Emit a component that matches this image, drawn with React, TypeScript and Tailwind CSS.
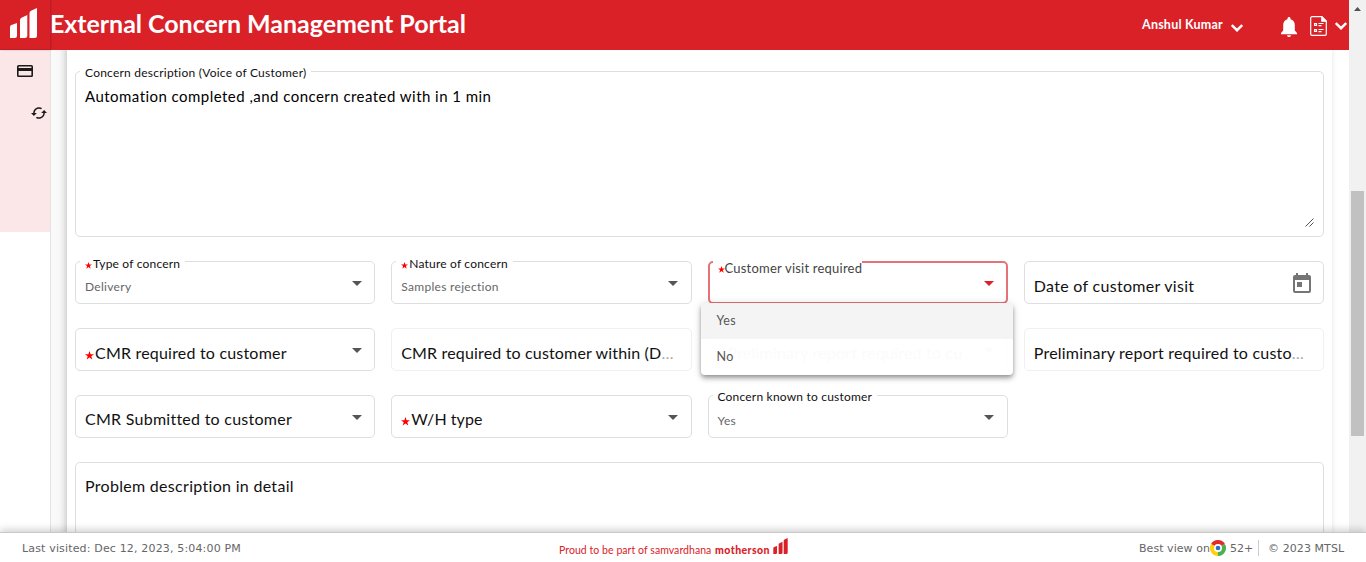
import React from "react";

const mulish = "font-['Lato','Open_Sans',sans-serif]";

function Star({ className }: { className: string }) {
  return (
    <svg viewBox="0 0 20 20" className={`shrink-0 fill-[#ff0000] ${className}`}>
      <path d="M10 0l2.500 7H20l-6 4.700L16.200 19 10 14.600 3.800 19 6 11.700 0 7h7.500z" />
    </svg>
  );
}

function Bars({ className }: { className: string }) {
  return (
    <svg viewBox="0 0 27 30" className={`shrink-0 ${className}`} fill="currentColor">
      <path d="M0 19q0-1.500 1.500-2L7 15v12.500q0 2.500-2.500 2.500H0z" />
      <path d="M10 12q0-1.500 1.500-2.200L17.300 7v20.500q0 2.500-2.500 2.500H10z" />
      <path d="M19.500 5q0-1.500 1.500-2.200L27 0v27.500q0 2.500-2.500 2.500h-5z" />
    </svg>
  );
}

function Chevron() {
  return (
    <svg viewBox="0 0 12 8" className="h-2 w-3 shrink-0" fill="none" stroke="white" strokeWidth="2.400">
      <path d="M.8 1 6 6.200 11.200 1" />
    </svg>
  );
}

function Header() {
  return (
    <header className="relative z-20 flex h-[50px] w-[1349px] shrink-0 items-start bg-[#da2128] text-white">
      <div className="h-[50px] w-[50px] shrink-0 border-b border-[#c01c23] bg-[#d82027] pl-[10px] pt-2 shadow-[1px_0_2px_rgba(0,0,0,0.2)]">
        <Bars className="h-[30px] w-[27px]" />
      </div>
      <h1 className="whitespace-nowrap pt-[7px] text-[25px] font-bold leading-[32px] tracking-[-0.04px]">
        External Concern Management Portal
      </h1>
      <div className="ml-auto flex items-start">
        <span className="mt-[17px] w-[89px] whitespace-nowrap text-[12.500px] font-bold leading-4 tracking-[0.22px]">Anshul Kumar</span>
        <div className="mr-[38px] mt-6"><Chevron /></div>
        <svg viewBox="0 0 16 20" className="mr-[13px] mt-[17px] h-5 w-4" fill="white">
          <path d="M8 0c.9 0 1.500.6 1.500 1.500v.7C12.200 2.900 13.800 5.200 13.800 8v5.500L16 16v1.300H0V16l2.200-2.500V8c0-2.800 1.600-5.100 4.300-5.800v-.7C6.500.6 7.100 0 8 0zM6 18.200h4c0 1.100-.9 1.800-2 1.800s-2-.7-2-1.800z" />
        </svg>
        <svg viewBox="0 0 17 20" className="mr-2 mt-4 h-5 w-[17px]" fill="none" stroke="white" strokeWidth="1.200">
          <path d="M2 .7h9.800l4.500 4.500v12.800a1.300 1.300 0 0 1-1.300 1.300h-13A1.300 1.300 0 0 1 .7 18v-16A1.300 1.300 0 0 1 2 .7z" />
          <path d="M11.800.7v4.500h4.500z" fill="white" />
          <path d="M4.600 7.600h1.900v1.900H4.600zM4.600 13.600h1.900v1.900H4.600zM8.500 7.500h5M8.500 9.700h3M8.500 13.500h5M8.500 15.700h3" />
        </svg>
        <div className="mr-[2px] mt-[22px]"><Chevron /></div>
      </div>
    </header>
  );
}

function Sidebar() {
  return (
    <aside className="w-[51px] shrink-0 border-r border-[#e3e3e3] bg-white">
      <div className="h-[182px] bg-[#fbe7e8] pt-[15px] text-[#1d1a1a]">
        <svg viewBox="0 0 15 12" className="ml-[17px] h-3 w-[16px]" preserveAspectRatio="none" fill="currentColor">
          <path fillRule="evenodd" d="M1.500 0h12A1.500 1.500 0 0 1 15 1.500v9a1.500 1.500 0 0 1-1.500 1.500h-12A1.500 1.500 0 0 1 0 10.500v-9A1.500 1.500 0 0 1 1.500 0zM1.500 1.500V3h12V1.500zM1.500 6v4.500h12V6z" />
        </svg>
        <svg viewBox="1 4 22 16" className="ml-[31px] mt-[30px] h-3 w-4" fill="currentColor">
          <path d="M19 8l-4 4h3c0 3.310-2.690 6-6 6-1.010 0-1.970-.25-2.800-.7l-1.460 1.460C8.970 19.540 10.430 20 12 20c4.420 0 8-3.580 8-8h3l-4-4zM6 12c0-3.310 2.690-6 6-6 1.010 0 1.970.25 2.800.7l1.460-1.460C15.030 4.460 13.570 4 12 4c-4.420 0-8 3.580-8 8H1l4 4 4-4H6z" />
        </svg>
      </div>
    </aside>
  );
}

type FieldProps = {
  label: string;
  value?: string;
  required?: boolean;
  disabled?: boolean;
  focused?: boolean;
  calendar?: boolean;
  plain?: boolean;
  labelClass?: string;
  children?: React.ReactNode;
};

function Field({ label, value, required, disabled, focused, calendar, plain, labelClass = "", children }: FieldProps) {
  const border = focused ? "border-2 border-[#e57277] pl-2 pr-[11.500px]" : disabled ? "border border-[#f0f0f0] pl-[9px] pr-[12.500px]" : "border border-[#dedede] pl-[9px] pr-[12.500px]";
  const floating = value !== undefined || focused;
  return (
    <div className={`relative flex h-[43px] items-center rounded-[5px] ${border}`}>
      {floating && !focused && (
        <span className={`absolute left-1 top-[-7px] flex h-[18px] items-center whitespace-nowrap bg-white px-[5px] text-[12px] leading-4 text-[#111] ${labelClass}`}>
          {required && <Star className="mr-px mt-[2px] h-[7px] w-[7px]" />}
          {label}
        </span>
      )}
      {focused && (
        <span className={`absolute left-[3px] top-[-4px] flex h-[18px] items-center whitespace-nowrap bg-white pl-[5px] text-[13px] leading-4 text-[#444] ${labelClass}`}>
          {required && <Star className="mt-[3px] h-[7px] w-[7px]" />}
          {label}
        </span>
      )}
      {value && <span className="whitespace-nowrap pt-[9px] text-[12px] leading-4 tracking-[0.3px] text-[#666]">{value}</span>}
      {!floating && (
        <span className={`flex items-center whitespace-nowrap text-[16px] leading-5 text-[#111] ${labelClass}`}>
          {required && <Star className="mr-px mt-[5px] h-[9px] w-[9px]" />}
          {label}
          {disabled && <span className="text-[#aaa]">…</span>}
        </span>
      )}
      {!plain && !calendar && (
        <svg viewBox="0 0 10 5" className={`ml-auto mt-[2px] h-[5px] w-[10px] shrink-0 ${focused ? "fill-[#da2128]" : "fill-[#555]"}`}>
          <path d="M0 0h10L5 5z" />
        </svg>
      )}
      {calendar && (
        <svg viewBox="0 0 18 20" className="ml-auto h-5 w-[18px] shrink-0" fill="#757575">
          <path fillRule="evenodd" d="M3 0h2v2h8V0h2v2h1a2 2 0 0 1 2 2v14a2 2 0 0 1-2 2H2a2 2 0 0 1-2-2V4a2 2 0 0 1 2-2h1zM2 7v11h14V7zM4 9h5v5H4z" />
        </svg>
      )}
      {children}
    </div>
  );
}

function VisitMenu() {
  return (
    <div role="listbox" className="absolute left-[-9px] top-[40px] z-10 h-[72px] w-[312px] overflow-hidden rounded-[4px] bg-white opacity-[0.985] shadow-[0_2px_4px_-1px_rgba(0,0,0,0.3),0_4px_5px_rgba(0,0,0,0.18),0_1px_10px_rgba(0,0,0,0.14)]">
      {["Yes", "No"].map((o, i) => (
        <div key={o} className={`flex h-9 items-center pl-4 pt-px text-[12.500px] tracking-[0.3px] text-[#555] ${i === 0 ? "bg-[#f4f4f4]" : ""}`}>{o}</div>
      ))}
    </div>
  );
}

function Form() {
  return (
    <main className="h-full w-[1265px] shrink-0 bg-white px-2 pt-[21px] shadow-[0_0_5px_rgba(0,0,0,0.12)]">
      <div className="relative h-[166px] rounded-[5px] border border-[#dedede] pl-[9px] pt-[14px]">
        <span className="absolute left-1 top-[-8px] whitespace-nowrap bg-white px-[5px] text-[12px] leading-[18px] tracking-[0.23px] text-[#111]">
          Concern description (Voice of Customer)
        </span>
        <p className="whitespace-nowrap text-[15px] leading-5 tracking-[0.46px] text-black">Automation completed ,and concern created with in 1 min</p>
        <svg viewBox="0 0 9 9" className="absolute bottom-[9px] right-[9px] h-[9px] w-[9px]" stroke="#555" strokeWidth="1" fill="none">
          <path d="M.5 8.500l8-8M4.500 8.500l4-4" />
        </svg>
      </div>
      <div className="mt-6 grid grid-cols-4 gap-x-4 gap-y-6">
        <Field label="Type of concern" value="Delivery" required labelClass="tracking-[0.2px]" />
        <Field label="Nature of concern" value="Samples rejection" required labelClass="tracking-[0.2px]" />
        <Field label="Customer visit required" required focused labelClass="tracking-[0.22px]">
          <VisitMenu />
        </Field>
        <Field label="Date of customer visit" calendar labelClass="pt-[6px] tracking-[0.3px]" />
        <Field label="CMR required to customer" required labelClass="pt-[6px] tracking-[0.2px]" />
        <Field label="CMR required to customer within (D" disabled plain labelClass="pt-[6px] tracking-[0.16px]" />
        <Field label="Preliminary report required to cu" required disabled labelClass="pt-[6px] tracking-[0.2px]" />
        <Field label="Preliminary report required to custo" disabled plain labelClass="pt-[6px] tracking-[0.22px]" />
        <Field label="CMR Submitted to customer" labelClass="pt-1 tracking-[0.26px]" />
        <Field label="W/H type" required labelClass="pt-1 tracking-[0.05px]" />
        <Field label="Concern known to customer" value="Yes" labelClass="-mt-px tracking-[0.2px]" />
      </div>
      <div className="mt-6 h-[120px] rounded-[5px] border border-[#dedede] pl-[9px] pt-[13px] text-[16px] leading-5 tracking-[0.3px] text-[#111]">
        Problem description in detail
      </div>
    </main>
  );
}

function Scrollbar() {
  return (
    <div className="h-full w-[17px] shrink-0 bg-[#f1f1f1] px-[2px] pt-[7px]">
      <svg viewBox="0 0 7 4" className="ml-[3px] h-1 w-[7px]" fill="#505050"><path d="M0 4 3.500 0 7 4z" /></svg>
      <div className="mt-[180px] h-[245px] w-[13px] bg-[#c1c1c1]" />
    </div>
  );
}

function Chrome() {
  return (
    <svg viewBox="0 0 16 16" className="h-4 w-4 shrink-0">
      <path d="M8 8 1.070 4A8 8 0 0 1 14.930 4z" fill="#e02b26" />
      <path d="M8 8 14.930 4A8 8 0 0 1 8 16z" fill="#4caf50" />
      <path d="M8 8v8A8 8 0 0 1 1.070 4z" fill="#fdd20a" />
      <circle cx="8" cy="8" r="4" fill="white" />
      <circle cx="8" cy="8" r="2.300" fill="#2a6fc9" />
    </svg>
  );
}

function Footer() {
  return (
    <footer className="relative z-30 flex h-[30px] w-full shrink-0 items-start border-t border-[#c8c8c8] bg-white font-['DejaVu_Sans',sans-serif] text-[11px] leading-[14px] text-[#666] shadow-[0_-2px_8px_rgba(0,0,0,0.2)]">
      <span className="w-[559px] shrink-0 whitespace-nowrap pl-[22px] pt-[9px] tracking-[0.16px]">Last visited: Dec 12, 2023, 5:04:00 PM</span>
      <div className={`flex w-[580px] shrink-0 items-start whitespace-nowrap text-[#da2128] ${mulish}`}>
        <span className="w-[156px] pt-[10px] text-[10.500px] tracking-[0.06px]">Proud to be part of samvardhana</span>
        <span className="w-[58px] pt-[10px] text-[10.500px] font-black tracking-[0.45px]">motherson</span>
        <Bars className="mt-[5px] h-4 w-[15px]" />
      </div>
      <span className="w-[71px] shrink-0 whitespace-nowrap pt-[9px] tracking-[0.05px]">Best view on</span>
      <div className="pt-[7px]"><Chrome /></div>
      <span className="w-8 pl-1 pt-[9px]">52+</span>
      <span className="mt-[7px] h-4 border-l border-[#ccc]" />
      <span className="whitespace-nowrap pl-[9px] pt-[9px] tracking-[0.08px]">© 2023 MTSL</span>
    </footer>
  );
}

export default function App() {
  return (
    <div className={`flex h-[562px] w-[1366px] flex-col overflow-hidden bg-white ${mulish}`}>
      <div className="flex h-[532px] shrink-0">
        <div className="flex w-[1349px] shrink-0 flex-col">
          <Header />
          <div className="flex h-[482px]">
            <Sidebar />
            <div className="w-4 shrink-0 bg-gradient-to-r from-[#fafafa] from-10% via-[#f8f8f8] via-50% to-[#e2e2e2]" />
            <Form />
            <div className="grow" />
          </div>
        </div>
        <Scrollbar />
      </div>
      <Footer />
    </div>
  );
}
